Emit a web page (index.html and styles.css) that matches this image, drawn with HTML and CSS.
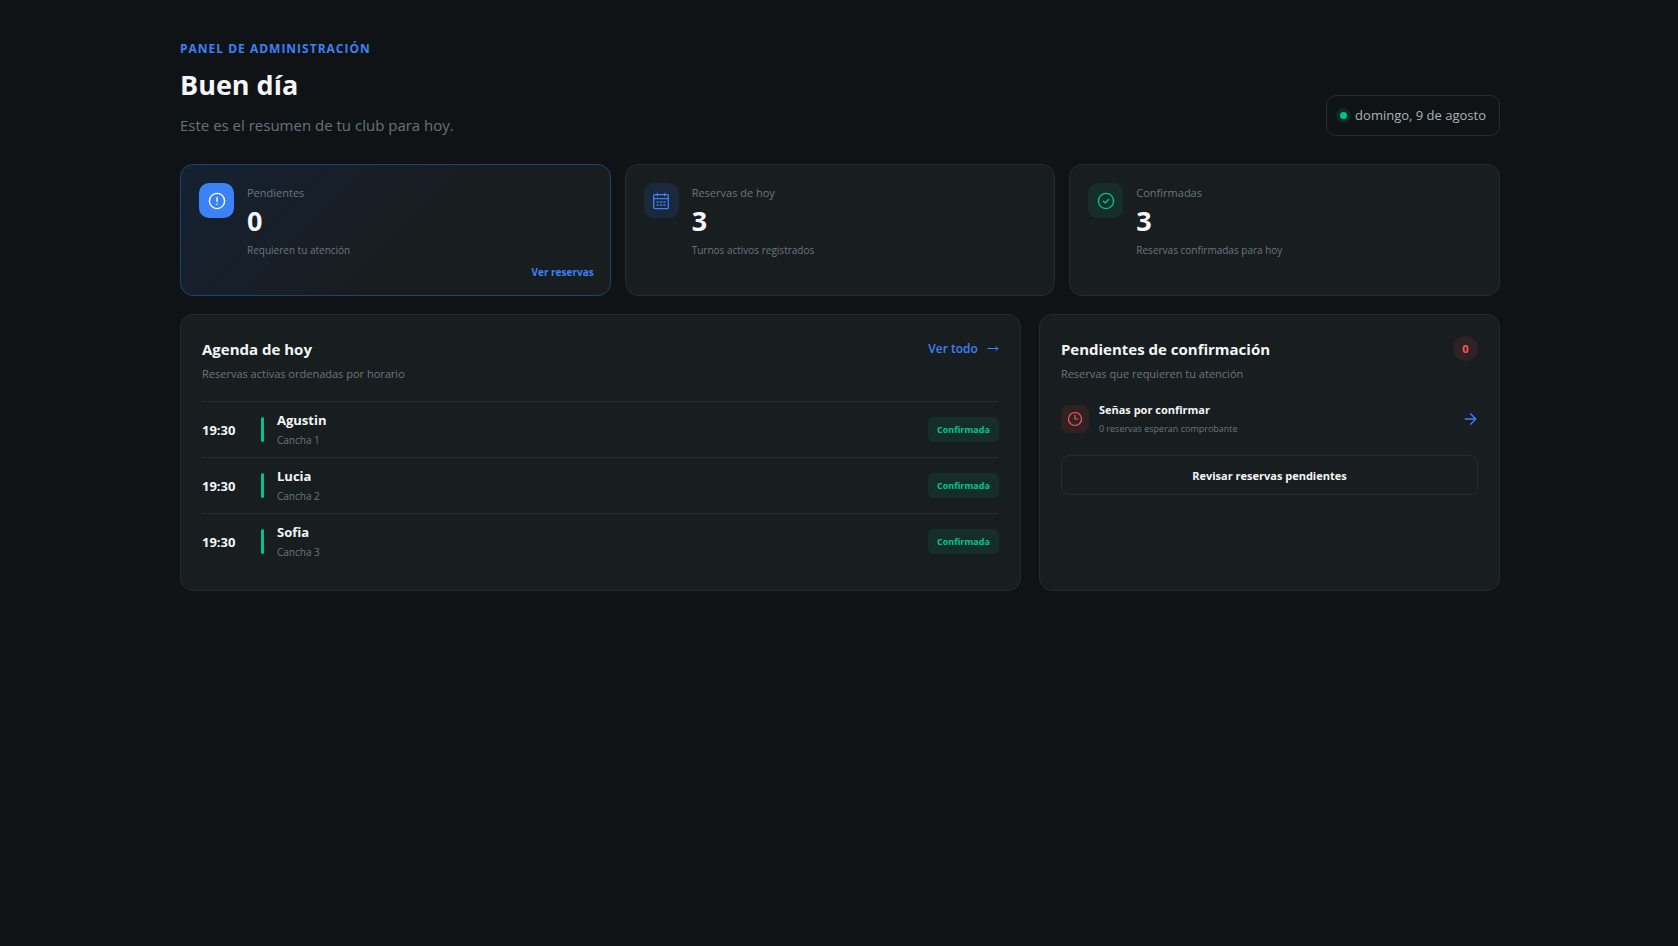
FILE: index.html
```
<!DOCTYPE html>
<html lang="es">
<head>
  <meta charset="UTF-8" />
  <meta name="viewport" content="width=device-width, initial-scale=1.0" />
  <title>Panel de administración</title>
  <link rel="stylesheet" href="styles.css">
</head>
<body>
  <main class="dashboard">
    <header class="page-header">
      <div>
        <p class="eyebrow">Panel de administración</p>
        <h1>Buen día</h1>
        <p class="subtitle">Este es el resumen de tu club para hoy.</p>
      </div>
      <div class="date-chip"><span class="date-dot"></span>domingo, 9 de agosto</div>
    </header>

    <section class="stats">
      <article class="stat stat-featured">
        <span class="stat-icon icon-solid">
          <svg width="18" height="18" viewBox="0 0 18 18" fill="none" stroke="currentColor" stroke-width="1.4" stroke-linecap="round">
            <circle cx="9" cy="9" r="7.6"/>
            <path d="M9 5.6v4M9 12.1v.2"/>
          </svg>
        </span>
        <div class="stat-body">
          <p class="stat-label">Pendientes</p>
          <p class="stat-value">0</p>
          <p class="stat-note">Requieren tu atención</p>
        </div>
        <a class="stat-link" href="#reservas">Ver reservas</a>
      </article>

      <article class="stat">
        <span class="stat-icon icon-blue">
          <svg width="18" height="18" viewBox="0 0 18 18" fill="none" stroke="currentColor" stroke-width="1.3" stroke-linecap="round" stroke-linejoin="round">
            <rect x="1.7" y="2.6" width="14.6" height="14" rx="1"/>
            <path d="M1.7 6.7h14.6M5.4 1.4v2.4M12.6 1.4v2.4"/>
            <path d="M5 10h1.2M8.4 10h1.2M11.8 10H13M5 13h1.2M8.4 13h1.2M11.8 13H13"/>
          </svg>
        </span>
        <div class="stat-body">
          <p class="stat-label">Reservas de hoy</p>
          <p class="stat-value">3</p>
          <p class="stat-note">Turnos activos registrados</p>
        </div>
      </article>

      <article class="stat">
        <span class="stat-icon icon-green">
          <svg width="18" height="18" viewBox="0 0 18 18" fill="none" stroke="currentColor" stroke-width="1.4" stroke-linecap="round" stroke-linejoin="round">
            <circle cx="9" cy="9" r="7.6"/>
            <path d="M6.4 9.2l1.8 1.7 3.4-3.4"/>
          </svg>
        </span>
        <div class="stat-body">
          <p class="stat-label">Confirmadas</p>
          <p class="stat-value">3</p>
          <p class="stat-note">Reservas confirmadas para hoy</p>
        </div>
      </article>
    </section>

    <div class="panels">
      <section class="panel">
        <div class="panel-head">
          <div>
            <h2>Agenda de hoy</h2>
            <p class="panel-note">Reservas activas ordenadas por horario</p>
          </div>
          <a class="panel-link" href="#agenda">Ver todo
            <svg width="12" height="12" viewBox="0 0 12 12" fill="none" stroke="currentColor" stroke-linecap="round" stroke-linejoin="round">
              <path d="M1 5.5h10M8.8 3.5l2.2 2-2.2 2"/>
            </svg>
          </a>
        </div>
        <ul class="agenda">
          <li class="booking">
            <time>19:30</time>
            <span class="booking-bar"></span>
            <div>
              <p class="booking-name">Agustin</p>
              <p class="booking-court">Cancha 1</p>
            </div>
            <span class="badge">Confirmada</span>
          </li>
          <li class="booking">
            <time>19:30</time>
            <span class="booking-bar"></span>
            <div>
              <p class="booking-name">Lucia</p>
              <p class="booking-court">Cancha 2</p>
            </div>
            <span class="badge">Confirmada</span>
          </li>
          <li class="booking">
            <time>19:30</time>
            <span class="booking-bar"></span>
            <div>
              <p class="booking-name">Sofia</p>
              <p class="booking-court">Cancha 3</p>
            </div>
            <span class="badge">Confirmada</span>
          </li>
        </ul>
      </section>

      <section class="panel">
        <div class="panel-head">
          <div>
            <h2>Pendientes de confirmación</h2>
            <p class="panel-note">Reservas que requieren tu atención</p>
          </div>
          <span class="count">0</span>
        </div>
        <a class="pending" href="#senas">
          <span class="pending-icon">
            <svg width="16" height="16" viewBox="0 0 16 16" fill="none" stroke="currentColor" stroke-width="1.2" stroke-linecap="round" stroke-linejoin="round">
              <circle cx="8" cy="8" r="6.5"/>
              <path d="M8 4v4h2.8"/>
            </svg>
          </span>
          <span class="pending-text">
            <strong>Señas por confirmar</strong>
            <small>0 reservas esperan comprobante</small>
          </span>
          <svg class="pending-arrow" width="14" height="14" viewBox="0 0 14 14" fill="none" stroke="currentColor" stroke-width="1.3" stroke-linecap="round" stroke-linejoin="round">
            <path d="M1.2 7h10.6M6.6 1.8L11.8 7l-5.2 5.2"/>
          </svg>
        </a>
        <button class="review-btn" type="button">Revisar reservas pendientes</button>
      </section>
    </div>
  </main>
</body>
</html>
```
FILE: styles.css
```
* {
  box-sizing: border-box;
}
body {
  margin: 0;
  min-height: 100vh;
  background: #0f1315;
  color: #f4f6f8;
  font-family: 'Segoe UI', 'Open Sans', 'Noto Sans', sans-serif;
}
h1, h2, p, ul {
  margin: 0;
  padding: 0;
}
a {
  color: #3b82f6;
  text-decoration: none;
}
svg {
  display: block;
}
.dashboard {
  max-width: 1382px;
  margin: 0 auto;
  padding: 40px 30px 40px 32px;
}

/* Header */
.page-header {
  display: flex;
  justify-content: space-between;
  align-items: flex-end;
  margin-bottom: 28px;
}
.eyebrow {
  color: #3b82f6;
  font-size: 12px;
  font-weight: 700;
  line-height: 18px;
  letter-spacing: 1px;
  text-transform: uppercase;
}
h1 {
  margin-top: 8px;
  font-size: 27px;
  font-weight: 700;
  line-height: 38px;
}
.subtitle {
  margin-top: 10px;
  color: #68727a;
  font-size: 15px;
  line-height: 22px;
}
.date-chip {
  display: flex;
  align-items: center;
  gap: 8px;
  padding: 10px 13px;
  border: 1px solid #262b2f;
  border-radius: 10px;
  color: #aab2b9;
  font-size: 13px;
  line-height: 19px;
}
.date-dot {
  width: 7px;
  height: 7px;
  border-radius: 50%;
  background: #00c488;
  box-shadow: 0 0 0 4px #0e2822;
}

/* Stat cards */
.stats {
  display: grid;
  grid-template-columns: repeat(3, 1fr);
  gap: 14px;
  margin-bottom: 18px;
}
.stat {
  display: grid;
  grid-template-columns: 35px 1fr;
  column-gap: 13px;
  align-content: start;
  padding: 18px 16px 14px 18px;
  border: 1px solid #262b2f;
  border-radius: 13px;
  background: #181d20;
}
.stat-featured {
  border-color: #20407a;
  background: linear-gradient(135deg, #152132, #181d20 55%);
}
.stat-icon {
  display: grid;
  place-items: center;
  width: 35px;
  height: 35px;
  border-radius: 10px;
}
.icon-solid {
  background: #3b82f6;
  color: #fff;
}
.icon-blue {
  background: #1b293d;
  color: #3b82f6;
}
.icon-green {
  background: #162e2a;
  color: #00c488;
}
.stat-body {
  padding-top: 2px;
}
.stat-label {
  color: #6c767e;
  font-size: 11px;
  line-height: 16px;
}
.stat-value {
  font-size: 27px;
  font-weight: 700;
  line-height: 40px;
}
.stat-note {
  color: #6c767e;
  font-size: 10px;
  line-height: 18px;
}
.stat-link {
  grid-column: 1 / -1;
  justify-self: end;
  margin-top: 4px;
  font-size: 10px;
  font-weight: 700;
  line-height: 18px;
}

/* Panels */
.panels {
  display: grid;
  grid-template-columns: 1.55fr 0.85fr;
  gap: 18px;
}
.panel {
  padding: 21px;
  border: 1px solid #262b2f;
  border-radius: 13px;
  background: #181d20;
}
.panel-head {
  display: flex;
  justify-content: space-between;
  align-items: flex-start;
}
h2 {
  font-size: 15px;
  font-weight: 700;
  line-height: 26px;
}
.panel-note {
  color: #6c767e;
  font-size: 11px;
  line-height: 24px;
}
.panel-link {
  display: flex;
  align-items: center;
  gap: 9px;
  font-size: 12px;
  font-weight: 600;
  line-height: 25px;
}
.agenda {
  margin-top: 15px;
  list-style: none;
}
.booking {
  display: grid;
  grid-template-columns: 46px 3px 1fr auto;
  column-gap: 13px;
  align-items: center;
  height: 56px;
  border-top: 1px solid #262b2f;
}
.booking time {
  font-size: 13px;
  font-weight: 700;
}
.booking-bar {
  height: 25px;
  border-radius: 2px;
  background: #00c488;
}
.booking-name {
  font-size: 13px;
  font-weight: 700;
  line-height: 20px;
}
.booking-court {
  color: #6c767e;
  font-size: 10px;
  line-height: 20px;
}
.badge {
  padding: 1px 9px 0;
  border-radius: 6px;
  background: #162e2a;
  color: #00c488;
  font-size: 9px;
  font-weight: 700;
  line-height: 24px;
}
.count {
  width: 25px;
  border-radius: 50%;
  background: #302125;
  color: #ff5757;
  font-size: 11px;
  font-weight: 700;
  line-height: 25px;
  text-align: center;
}
.pending {
  display: flex;
  align-items: center;
  gap: 10px;
  margin-top: 14px;
}
.pending-icon {
  display: grid;
  place-items: center;
  width: 28px;
  height: 28px;
  border-radius: 8px;
  background: #302125;
  color: #ff5757;
}
.pending-text {
  display: flex;
  flex: 1;
  flex-direction: column;
}
.pending-text strong {
  color: #f4f6f8;
  font-size: 11px;
  line-height: 20px;
}
.pending-text small {
  color: #6c767e;
  font-size: 9px;
  line-height: 18px;
}
.review-btn {
  width: 100%;
  height: 40px;
  margin-top: 17px;
  border: 1px solid #262b2f;
  border-radius: 8px;
  background: transparent;
  color: #f4f6f8;
  font: 700 11px 'Segoe UI', 'Open Sans', 'Noto Sans', sans-serif;
  cursor: pointer;
}
```
